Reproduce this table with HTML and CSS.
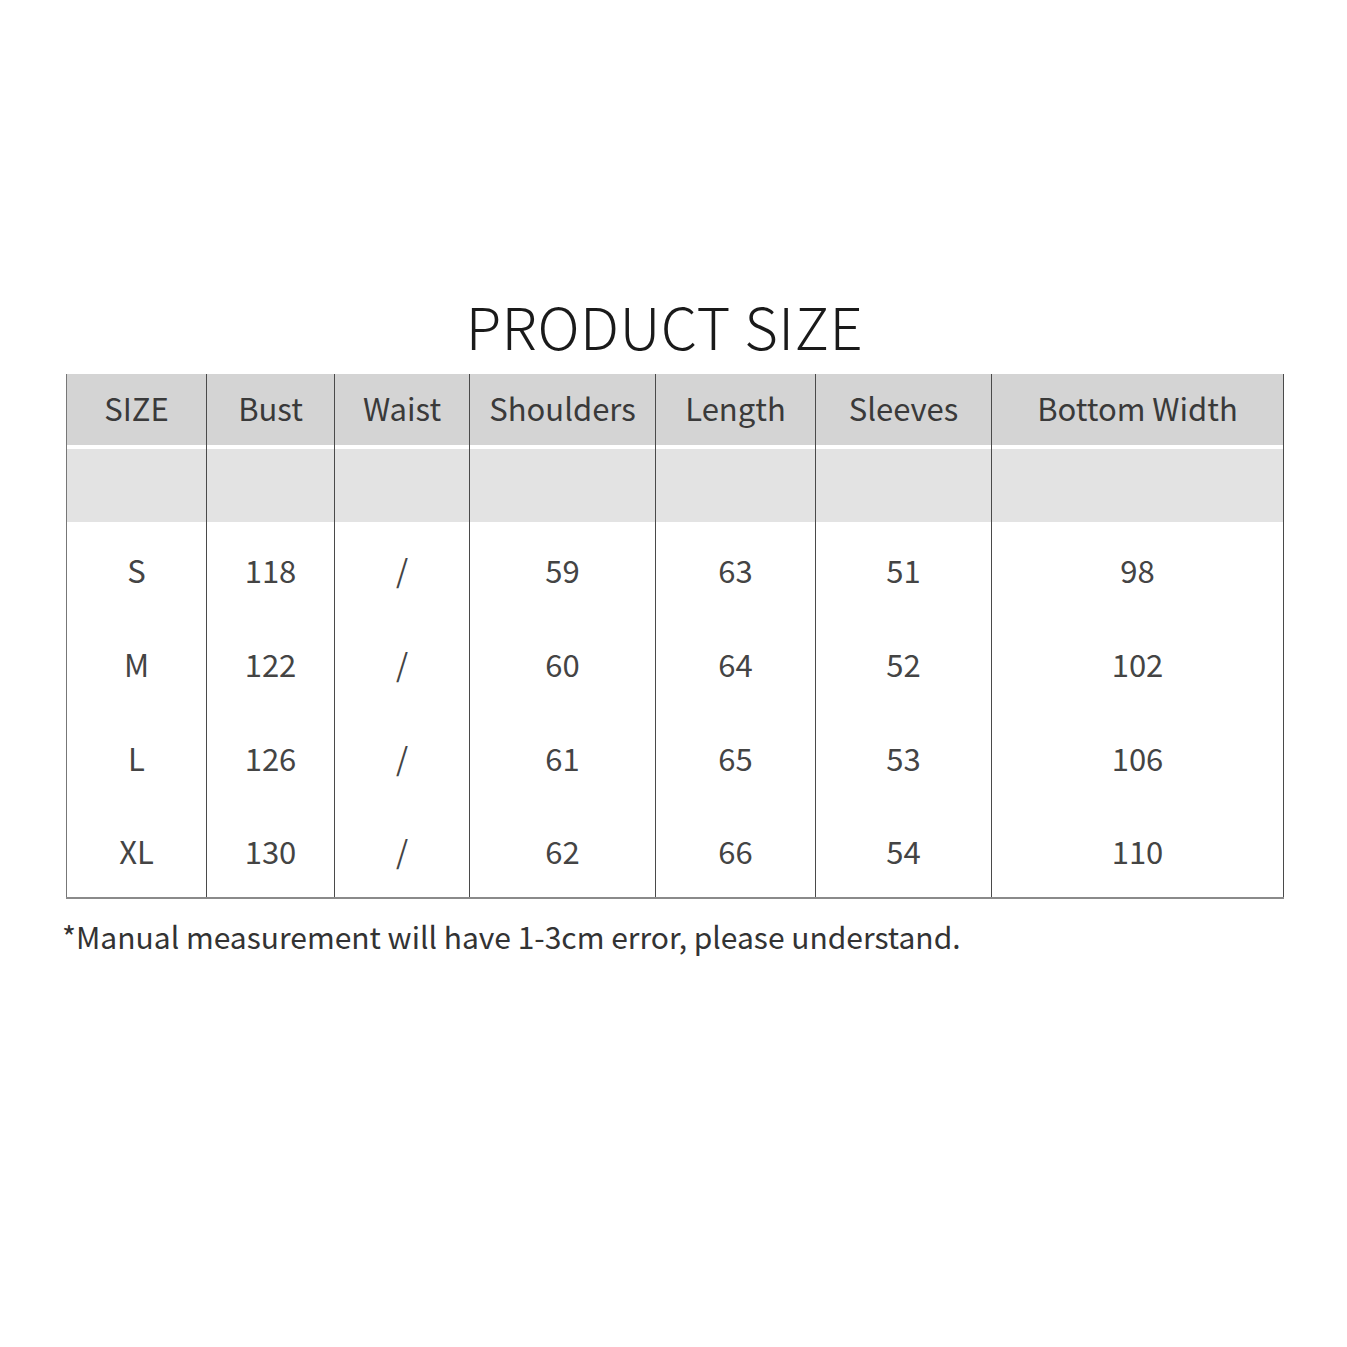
FILE: index.html
```html
<!DOCTYPE html>
<html>
<head>
<meta charset="utf-8">
<link rel="stylesheet" href="styles.css">
</head>
<body>
<div class="page">
  <h1 class="title">PRODUCT SIZE</h1>
  <table class="chart">
    <colgroup>
      <col class="c1"><col class="c2"><col class="c3"><col class="c4"><col class="c5"><col class="c6"><col class="c7">
    </colgroup>
    <thead>
      <tr class="head">
        <th>SIZE</th><th>Bust</th><th>Waist</th><th>Shoulders</th><th>Length</th><th>Sleeves</th><th>Bottom Width</th>
      </tr>
      <tr class="blank">
        <td></td><td></td><td></td><td></td><td></td><td></td><td></td>
      </tr>
    </thead>
    <tbody>
      <tr><td>S</td><td>118</td><td>/</td><td>59</td><td>63</td><td>51</td><td>98</td></tr>
      <tr><td>M</td><td>122</td><td>/</td><td>60</td><td>64</td><td>52</td><td>102</td></tr>
      <tr><td>L</td><td>126</td><td>/</td><td>61</td><td>65</td><td>53</td><td>106</td></tr>
      <tr><td>XL</td><td>130</td><td>/</td><td>62</td><td>66</td><td>54</td><td>110</td></tr>
    </tbody>
  </table>
  <p class="note">*Manual measurement will have 1-3cm error, please understand.</p>
</div>
</body>
</html>
```

FILE: styles.css
```css
html, body {
  margin: 0;
  padding: 0;
  background: #fff;
}
body {
  font-family: "Noto Sans CJK SC", "Noto Sans", sans-serif;
  font-weight: 400;
  color: #333;
}
.page {
  padding: 286px 64px 0 66px;
}
.title {
  margin: 0 20px 10px 0;
  text-align: center;
  font-size: 58px;
  font-weight: 300;
  line-height: 78px;
  color: #1a1a1a;
  letter-spacing: 0.5px;
}
.chart {
  width: 1217px;
  border-collapse: collapse;
  table-layout: fixed;
  font-size: 31px;
}
.c1 { width: 140px; }
.c2 { width: 128px; }
.c3 { width: 135px; }
.c4 { width: 186px; }
.c5 { width: 160px; }
.c6 { width: 176px; }
.c7 { width: 292px; }
.chart th, .chart td {
  border-left: 1px solid #4a4a4a;
  border-right: 1px solid #4a4a4a;
  text-align: center;
  padding: 0;
  font-weight: 400;
}
.chart th:first-child, .chart td:first-child {
  border-left-color: #777;
}
.head th {
  height: 71px;
  padding-bottom: 4px;
  box-sizing: border-box;
  background: #d4d4d4;
  color: #3a3a3a;
}
.blank td {
  height: 77px;
  background: linear-gradient(#fff 0, #fff 4px, #e3e3e3 4px);
}
tbody td {
  height: 94px;
  padding-bottom: 8px;
  box-sizing: border-box;
  color: #444;
}
tbody tr:last-child td {
  border-bottom: 2px solid #8a8a8a;
}
.note {
  margin: 15px 0 0 -4px;
  font-size: 30px;
  color: #333;
}
```
